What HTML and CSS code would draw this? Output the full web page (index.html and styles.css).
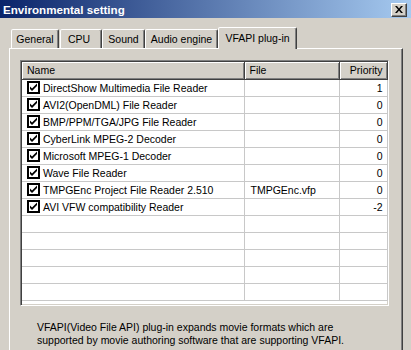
FILE: index.html
```html
<!DOCTYPE html>
<html lang="en">
<head>
    <meta charset="UTF-8">
    <title>Environmental setting</title>
    <link rel="stylesheet" href="styles.css">
</head>
<body>

    <div class="titlebar">
        <span class="title">Environmental setting</span>
        <button class="close" type="button">
            <svg width="8" height="7" viewBox="0 0 8 7">
                <path d="M0 0h2l2 2.5 2-2.5h2l-3 3.5 3 3.5h-2l-2-2.5-2 2.5h-2l3-3.5z" fill="#000"/>
            </svg>
        </button>
    </div>

    <div class="dialog">
        <div class="tabs">
            <div class="tab tab-general">General</div>
            <div class="tab tab-cpu">CPU</div>
            <div class="tab tab-sound">Sound</div>
            <div class="tab tab-audio">Audio engine</div>
            <div class="tab tab-vfapi active">VFAPI plug-in</div>
        </div>

        <div class="panel">
            <div class="list">
                <table>
                    <colgroup>
                        <col class="col-name">
                        <col class="col-file">
                        <col class="col-priority">
                    </colgroup>
                    <thead>
                        <tr>
                            <th>Name</th>
                            <th>File</th>
                            <th class="num">Priority</th>
                        </tr>
                    </thead>
                    <tbody id="rows"></tbody>
                </table>
            </div>

            <p class="note">
                VFAPI(Video File API) plug-in expands movie formats which are<br>
                supported by movie authoring software that are supporting VFAPI.
            </p>
        </div>
    </div>

    <script>
        var plugins = [
            ["DirectShow Multimedia File Reader", "", "1"],
            ["AVI2(OpenDML) File Reader", "", "0"],
            ["BMP/PPM/TGA/JPG File Reader", "", "0"],
            ["CyberLink MPEG-2 Decoder", "", "0"],
            ["Microsoft MPEG-1 Decoder", "", "0"],
            ["Wave File Reader", "", "0"],
            ["TMPGEnc Project File Reader 2.510", "TMPGEnc.vfp", "0"],
            ["AVI VFW compatibility Reader", "", "-2"]
        ];

        var check = '<svg class="check" width="13" height="13" viewBox="0 0 13 13">' +
            '<rect x="1" y="1" width="11" height="11" fill="#fff" stroke="#000" stroke-width="2"/>' +
            '<path d="M3 5.5l2 2 5-5v2.5l-5 5-2-2z" fill="#000"/></svg>';

        var body = document.getElementById("rows");
        var html = "";
        for (var i = 0; i < 13; i++) {
            var p = plugins[i];
            if (p) {
                html += '<tr><td><span class="item">' + check + p[0] + '</span></td>' +
                    '<td>' + p[1] + '</td><td class="num">' + p[2] + '</td></tr>';
            } else {
                html += '<tr><td></td><td></td><td></td></tr>';
            }
        }
        body.innerHTML = html;
    </script>
</body>
</html>
```

FILE: styles.css
```css
body {
    margin: 0;
    background: #d4d0c8;
    font-family: "Liberation Sans", Arial, sans-serif;
    font-size: 10.5px;
    color: #000;
    overflow: hidden;
    height: 350px;
}

.titlebar {
    height: 18px;
    display: flex;
    align-items: center;
    justify-content: space-between;
    padding: 0 4px 0 3px;
    background: linear-gradient(to right, #0a246a, #a6caf0);
}
.titlebar .title {
    color: #fff;
    font-weight: bold;
    font-size: 11.6px;
}
.titlebar .close {
    width: 16px;
    height: 14px;
    padding: 0;
    margin-top: 1px;
    background: #d4d0c8;
    border: 1px solid;
    border-color: #fff #404040 #404040 #fff;
    box-shadow: inset -1px -1px 0 #808080;
    display: flex;
    align-items: center;
    justify-content: center;
}

.dialog {
    padding: 9px 0 0 9px;
}

.tabs {
    display: flex;
    align-items: flex-end;
    padding-left: 2px;
    height: 22px;
    position: relative;
    z-index: 1;
    margin-bottom: -1px;
}
.tab {
    box-sizing: border-box;
    height: 19px;
    margin-bottom: 1px;
    padding: 3px 0 0;
    text-align: center;
    border: 1px solid;
    border-bottom: 0;
    border-color: #fff #404040 transparent #fff;
    box-shadow: inset -1px 0 0 #808080;
    border-radius: 2px 2px 0 0;
    white-space: nowrap;
    background: #d4d0c8;
}
.tab-general { width: 48px; }
.tab-cpu { width: 42px; padding-left: 7px; margin-left: 1px; text-align: left; }
.tab-sound { width: 43px; }
.tab-audio { width: 73px; }
.tab-vfapi { width: 79px; }
.tab.active {
    height: 22px;
    margin: 0 -2px 0 0;
    padding-top: 4px;
}

.panel {
    width: 394px;
    height: 302px;
    box-sizing: border-box;
    border: 1px solid;
    border-bottom: 0;
    border-color: #fff #404040 transparent #fff;
    box-shadow: inset -1px 0 0 #808080;
    padding: 11px 0 0 10px;
}

.list {
    width: 369px;
    height: 246px;
    box-sizing: border-box;
    border: 1px solid;
    border-color: #808080 #fff #fff #808080;
    box-shadow: inset 1px 1px 0 #404040, inset -1px -1px 0 #d4d0c8;
    padding: 1px;
    background: #fff;
    overflow: hidden;
}
.list table {
    width: 365px;
    border-collapse: collapse;
    table-layout: fixed;
}
.col-name { width: 222px; }
.col-file { width: 95px; }
.col-priority { width: 48px; }

.list th {
    height: 17px;
    box-sizing: border-box;
    padding: 0 5px;
    font-weight: normal;
    text-align: left;
    background: #d4d0c8;
    border-right: 1px solid #404040;
    border-bottom: 1px solid #404040;
    box-shadow: inset 1px 1px 0 #fff, inset -1px -1px 0 #808080;
}
.list td {
    height: 17px;
    box-sizing: border-box;
    padding: 0 5px 0 6px;
    border-right: 1px solid #c8c8c8;
    border-bottom: 1px solid #c8c8c8;
    white-space: nowrap;
    overflow: hidden;
}
.list td:first-child {
    padding-left: 5px;
}
.list .num {
    text-align: right;
    padding-right: 4px;
}
.item {
    display: flex;
    align-items: center;
    gap: 3px;
}
.check {
    flex: none;
}

.note {
    margin: 15px 0 0 17px;
    line-height: 13px;
}
```
